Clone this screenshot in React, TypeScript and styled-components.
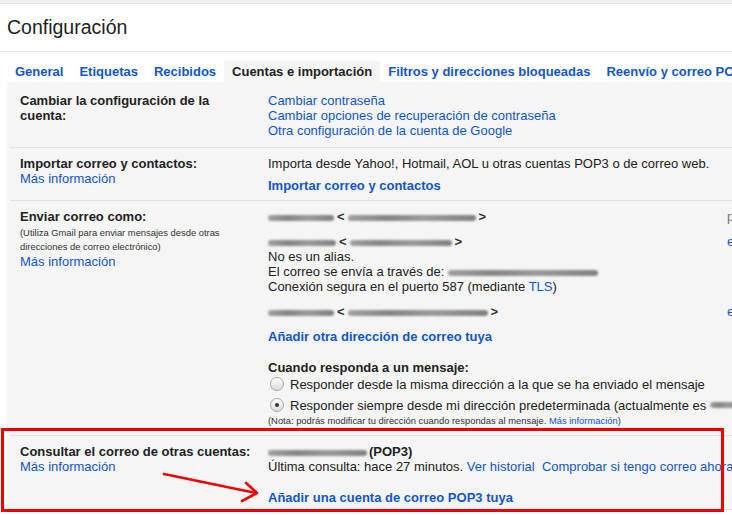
import React from 'react';
import styled, { createGlobalStyle } from 'styled-components';

const GlobalStyle = createGlobalStyle`
  html, body { margin: 0; padding: 0; background: #fff; overflow: hidden; }
  body { font-family: "Liberation Sans", Arial, sans-serif; font-size: 13px; color: #222; }
`;

const Page = styled.div`
  position: relative;
  width: 732px;
  height: 515px;
  overflow: hidden;
`;

const TopStrip = styled.div`
  height: 3px;
  background: #f1f1f1;
  border-bottom: 1px solid #e6e6e6;
`;

const Title = styled.h1`
  margin: 0;
  padding: 11px 7px 12px;
  font-size: 19.5px;
  font-weight: normal;
  line-height: 24px;
  color: #222;
  border-bottom: 1px solid #e5e5e5;
`;

const Tabs = styled.div`
  display: flex;
  padding: 9px 0 0 7px;
  width: 1200px;
  white-space: nowrap;
`;

const Tab = styled.div<{ $active?: boolean }>`
  padding: 0 8px;
  height: 21px;
  line-height: 21px;
  font-weight: bold;
  color: ${p => (p.$active ? '#222' : '#15c')};
  background: ${p => (p.$active ? '#f5f5f5' : 'transparent')};
`;

const Content = styled.div`
  margin-left: 7px;
  padding: 3px 0 0 3px;
  width: 1200px;
  background: #f5f5f5;
`;

const Row = styled.div<{ $pt?: number; $pb?: number }>`
  display: flex;
  padding: ${p => p.$pt ?? 8}px 0 ${p => p.$pb ?? 7}px;
  border-bottom: 1px solid #e2e2e2;
  line-height: 15px;
`;

const LabelCell = styled.div`
  flex: 0 0 auto;
  box-sizing: border-box;
  width: 258px;
  padding: 0 14px 0 10px;
`;

const LabelTitle = styled.div`
  font-weight: bold;
`;

const Small = styled.div<{ $mt?: number }>`
  font-size: 9.4px;
  line-height: 14px;
  margin-top: ${p => p.$mt ?? 0}px;
  color: #333;
  white-space: nowrap;
`;

const ValueCell = styled.div`
  flex: 1 1 auto;
  white-space: nowrap;
`;

const Link = styled.a<{ $bold?: boolean }>`
  color: #15c;
  text-decoration: none;
  font-weight: ${p => (p.$bold ? 'bold' : 'normal')};
  cursor: pointer;
`;

const Line = styled.div<{ $mt?: number }>`
  margin-top: ${p => p.$mt ?? 0}px;
`;

const Blur = styled.span<{ $w: number }>`
  display: inline-block;
  width: ${p => p.$w}px;
  height: 6px;
  vertical-align: middle;
  background: linear-gradient(90deg, #a0a0a0, #858585 30%, #9a9a9a 60%, #808080);
  border-radius: 3px;
  filter: blur(1.1px);
  margin-right: 2px;
`;

const Bracket = styled.span`
  font-weight: bold;
  color: #333;
  margin: 0 3px 0 1px;
`;

const AddressRow = styled.div<{ $mt?: number }>`
  display: flex;
  margin-top: ${p => p.$mt ?? 0}px;
`;

const AddressCell = styled.div`
  flex: 0 0 459px;
`;

const ActionCell = styled.div<{ $muted?: boolean }>`
  color: ${p => (p.$muted ? '#777' : '#15c')};
`;

const RadioRow = styled.div<{ $mt?: number }>`
  display: flex;
  align-items: center;
  height: 18px;
  margin-top: ${p => p.$mt ?? 0}px;
`;

const Radio = styled.span<{ $checked?: boolean }>`
  position: relative;
  box-sizing: border-box;
  width: 14px;
  height: 14px;
  margin: 0 6px 0 2px;
  border-radius: 50%;
  border: 1px solid #a8a8a8;
  background: linear-gradient(#fdfdfd, #dcdcdc);
  &::after {
    content: '';
    display: ${p => (p.$checked ? 'block' : 'none')};
    position: absolute;
    left: 4px;
    top: 4px;
    width: 4px;
    height: 4px;
    border-radius: 50%;
    background: #333;
  }
`;

const Highlight = styled.div`
  position: absolute;
  left: 1px;
  top: 428px;
  width: 723px;
  height: 84px;
  box-sizing: border-box;
  border: 3px solid #ee0000;
  pointer-events: none;
`;

const ArrowSvg = styled.svg`
  position: absolute;
  left: 0;
  top: 0;
  pointer-events: none;
`;

export default function App() {
  return (
    <Page>
      <GlobalStyle />
      <TopStrip />
      <Title>Configuración</Title>
      <Tabs>
        <Tab>General</Tab>
        <Tab>Etiquetas</Tab>
        <Tab>Recibidos</Tab>
        <Tab $active>Cuentas e importación</Tab>
        <Tab>Filtros y direcciones bloqueadas</Tab>
        <Tab>Reenvío y correo POP/IMAP</Tab>
        <Tab>Chat</Tab>
      </Tabs>
      <Content>
        <Row $pt={8} $pb={9}>
          <LabelCell>
            <LabelTitle>Cambiar la configuración de la cuenta:</LabelTitle>
          </LabelCell>
          <ValueCell>
            <Line><Link>Cambiar contraseña</Link></Line>
            <Line><Link>Cambiar opciones de recuperación de contraseña</Link></Line>
            <Line><Link>Otra configuración de la cuenta de Google</Link></Line>
          </ValueCell>
        </Row>
        <Row>
          <LabelCell>
            <LabelTitle>Importar correo y contactos:</LabelTitle>
            <Link>Más información</Link>
          </LabelCell>
          <ValueCell>
            <Line>Importa desde Yahoo!, Hotmail, AOL u otras cuentas POP3 o de correo web.</Line>
            <Line $mt={7}><Link $bold>Importar correo y contactos</Link></Line>
          </ValueCell>
        </Row>
        <Row>
          <LabelCell>
            <LabelTitle>Enviar correo como:</LabelTitle>
            <Small $mt={2}>
              (Utiliza Gmail para enviar mensajes desde otras
              <br />
              direcciones de correo electrónico)
            </Small>
            <Link>Más información</Link>
          </LabelCell>
          <ValueCell>
            <AddressRow>
              <AddressCell>
                <Blur $w={66} /><Bracket>&lt;</Bracket><Blur $w={128} /><Bracket>&gt;</Bracket>
              </AddressCell>
              <ActionCell $muted>predeterminada</ActionCell>
            </AddressRow>
            <AddressRow $mt={10}>
              <AddressCell>
                <Line><Blur $w={68} /><Bracket>&lt;</Bracket><Blur $w={102} /><Bracket>&gt;</Bracket></Line>
                <Line>No es un alias.</Line>
                <Line>El correo se envía a través de: <Blur $w={150} /></Line>
                <Line>Conexión segura en el puerto 587 (mediante <Link>TLS</Link>)</Line>
              </AddressCell>
              <ActionCell>editar información</ActionCell>
            </AddressRow>
            <AddressRow $mt={10}>
              <AddressCell>
                <Blur $w={66} /><Bracket>&lt;</Bracket><Blur $w={140} /><Bracket>&gt;</Bracket>
              </AddressCell>
              <ActionCell>editar información</ActionCell>
            </AddressRow>
            <Line $mt={10}><Link $bold>Añadir otra dirección de correo tuya</Link></Line>
            <Line $mt={16}><LabelTitle>Cuando responda a un mensaje:</LabelTitle></Line>
            <RadioRow>
              <Radio />
              Responder desde la misma dirección a la que se ha enviado el mensaje
            </RadioRow>
            <RadioRow $mt={3}>
              <Radio $checked />
              Responder siempre desde mi dirección predeterminada (actualmente es&nbsp;<Blur $w={30} />
            </RadioRow>
            <Small>
              (Nota: podrás modificar tu dirección cuando respondas al mensaje. <Link>Más información</Link>)
            </Small>
          </ValueCell>
        </Row>
        <Row $pb={4}>
          <LabelCell>
            <LabelTitle>Consultar el correo de otras cuentas:</LabelTitle>
            <Link>Más información</Link>
          </LabelCell>
          <ValueCell>
            <Line><Blur $w={99} /><LabelTitle as="span">(POP3)</LabelTitle></Line>
            <Line>
              Última consulta: hace 27 minutos. <Link>Ver historial</Link>
              &nbsp;&nbsp;<Link>Comprobar si tengo correo ahora</Link>
            </Line>
            <Line $mt={16}><Link $bold>Añadir una cuenta de correo POP3 tuya</Link></Line>
          </ValueCell>
        </Row>
      </Content>
      <Highlight />
      <ArrowSvg width="732" height="515" viewBox="0 0 732 515">
        <g stroke="#ee0000" strokeWidth="2.6" fill="none" strokeLinecap="round" strokeLinejoin="round">
          <line x1="164" y1="474" x2="256" y2="493" />
          <polyline points="246,483 257,493 242,501" />
        </g>
      </ArrowSvg>
    </Page>
  );
}
